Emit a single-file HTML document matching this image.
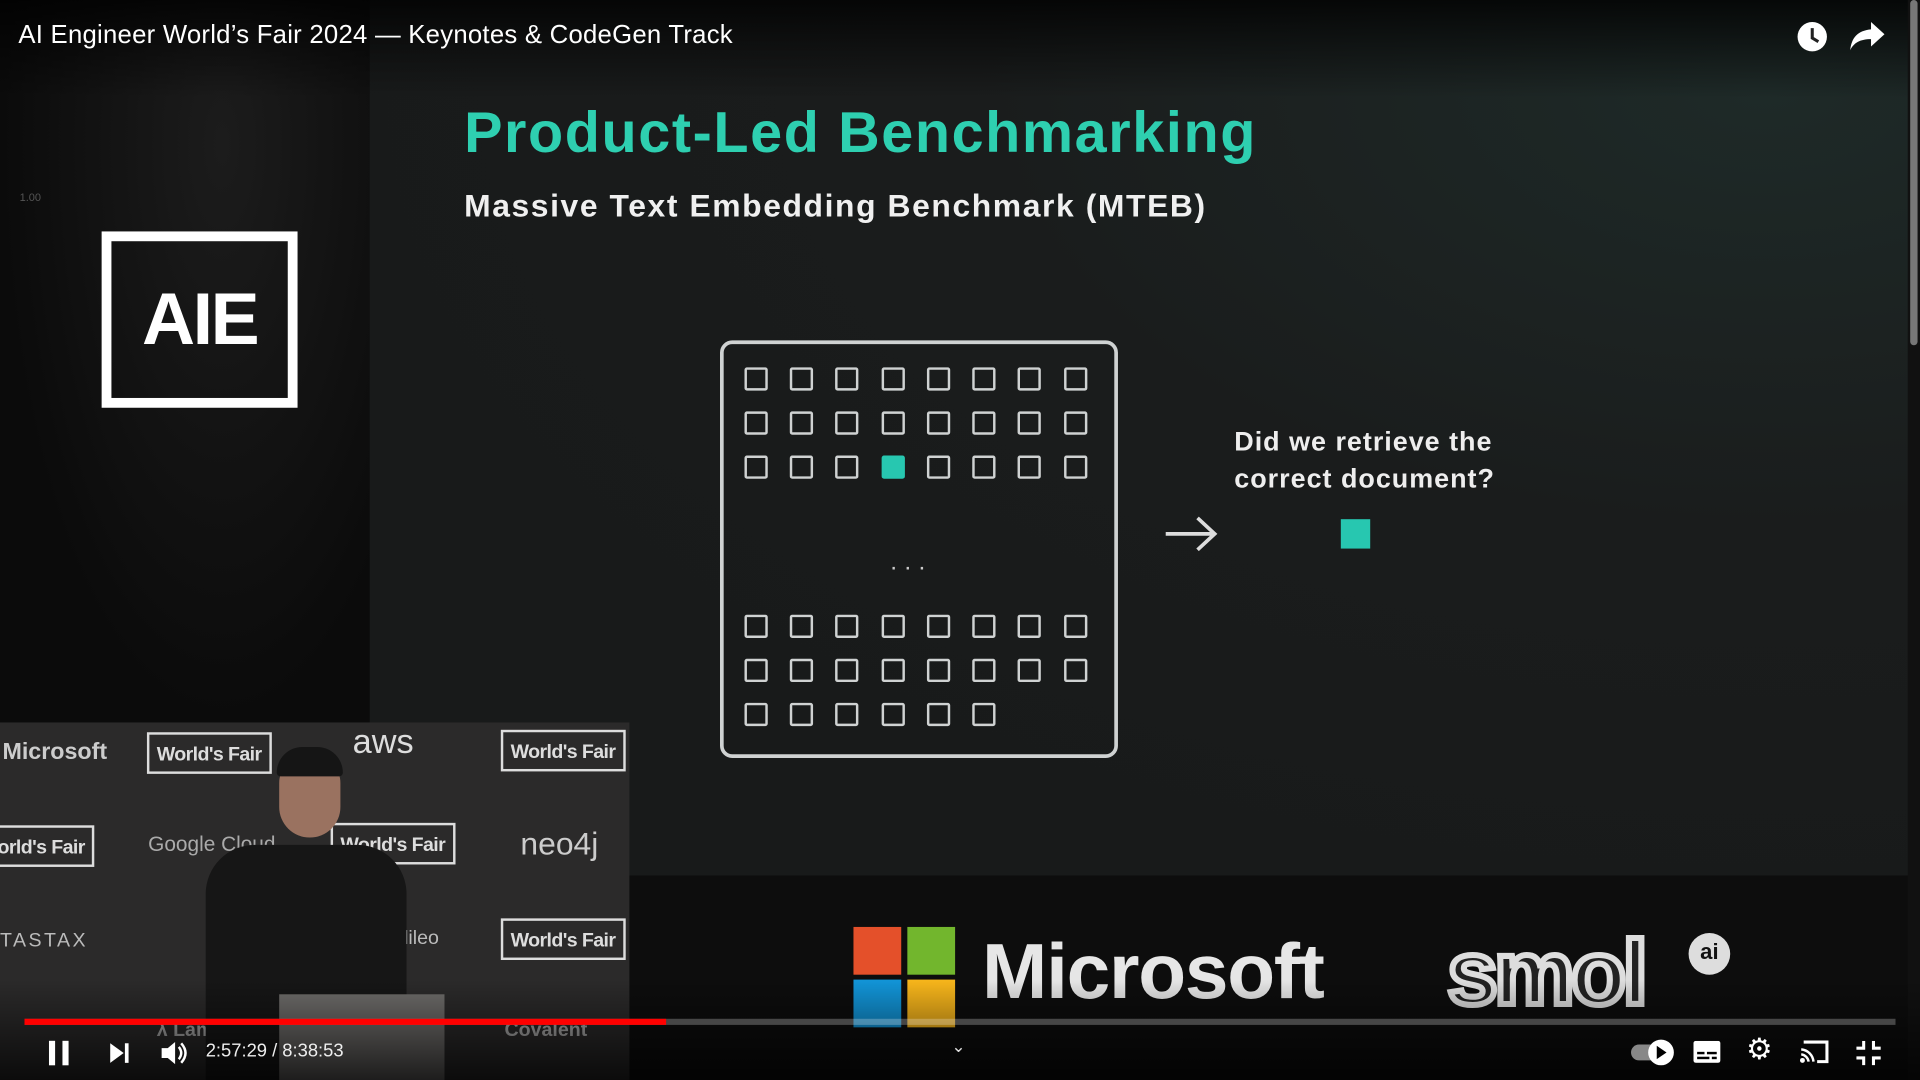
<!DOCTYPE html>
<html><head><meta charset="utf-8">
<style>
html,body{margin:0;padding:0;background:#000;overflow:hidden;width:1920px;height:1080px}
#s{position:absolute;left:0;top:0;width:1568px;height:882px;transform:scale(1.22449);transform-origin:0 0;background:#121515;overflow:hidden;font-family:"Liberation Sans",sans-serif}
.abs{position:absolute}
.sq{position:absolute;width:19px;height:19px;border:2.5px solid #cfd2d2;border-radius:2px;box-sizing:border-box}
.wf{position:absolute;border:2px solid #ddd;color:#ddd;font-weight:bold;font-size:16px;padding:8px 6px 4px;letter-spacing:-0.5px}
</style></head><body><div id="s">
<div class="abs" style="left:0;top:0;width:302px;height:590px;background:radial-gradient(ellipse at 60% 20%,#1c1c1c,#0b0b0b 70%)"></div>
<div class="abs" style="left:302px;top:0;width:1266px;height:715px;background:radial-gradient(ellipse at 90% 10%,#1e2a28,#1a1c1c 40%,#181a1a 80%)"></div>
<div class="abs" style="left:514px;top:715px;width:1054px;height:167px;background:#0d0d0d"></div>
<div class="abs" style="left:16px;top:156px;color:#555;font-size:9px">1.00</div>
<div class="abs" style="left:83px;top:189px;width:160px;height:144px;box-sizing:border-box;border:8px solid #fff;color:#fff;font-weight:bold;font-size:60px;text-align:center;line-height:128px;letter-spacing:-2px">AIE</div>
<div class="abs" style="left:379px;top:80px;color:#2ecfb0;font-weight:bold;font-size:47px;letter-spacing:1.3px">Product-Led Benchmarking</div>
<div class="abs" style="left:379px;top:153px;color:#f0f0f0;font-weight:bold;font-size:26px;letter-spacing:1.3px">Massive Text Embedding Benchmark (MTEB)</div>
<div class="abs" style="left:588px;top:278px;width:325px;height:341px;box-sizing:border-box;border:3px solid #cfd2d2;border-radius:10px"></div>
<div class="abs" style="left:727px;top:448px;color:#ccc;font-size:20px;letter-spacing:6px">...</div>
<svg class="abs" style="left:950px;top:420px" width="46" height="32"><path d="M2 16h40M28 3l14 13-14 13" stroke="#ddd" stroke-width="3" fill="none"/></svg>
<div class="abs" style="left:1095px;top:424px;width:24px;height:24px;background:#27c7b0"></div>
<div class="abs" style="left:1008px;top:346px;color:#eee;font-weight:bold;font-size:22px;line-height:30px;letter-spacing:0.8px">Did we retrieve the<br>correct document?</div>
<!-- inset -->
<div class="abs" style="left:0;top:590px;width:514px;height:292px;background:#2b2a2a;overflow:hidden">
 <div class="abs" style="left:2px;top:14px;color:#ccc;font-size:19px;font-weight:bold">Microsoft</div>
 <div class="wf" style="left:120px;top:8px">World's Fair</div>
 <div class="abs" style="left:288px;top:0;color:#ddd;font-size:28px">aws</div>
 <div class="wf" style="left:409px;top:6px">World's Fair</div>
 <div class="wf" style="left:-10px;top:84px">orld's Fair</div>
 <div class="abs" style="left:121px;top:90px;color:#aaa;font-size:17px">Google Cloud</div>
 <div class="wf" style="left:270px;top:82px">World's Fair</div>
 <div class="abs" style="left:425px;top:84px;color:#ccc;font-size:26px">neo4j</div>
 <div class="abs" style="left:0;top:170px;color:#bbb;font-size:16px;letter-spacing:2px">TASTAX</div>
 <div class="wf" style="left:409px;top:160px">World's Fair</div>
 <div class="abs" style="left:330px;top:168px;color:#bbb;font-size:16px">lileo</div>
 <div class="abs" style="left:412px;top:243px;color:#aaa;font-size:16px;font-weight:bold">Covalent</div>
 <div class="abs" style="left:128px;top:243px;color:#aaa;font-size:16px;font-weight:bold">λ Lamb</div>
 <!-- person -->
 <div class="abs" style="left:228px;top:28px;width:50px;height:66px;border-radius:24px 24px 28px 28px;background:#9a7260"></div>
 <div class="abs" style="left:226px;top:20px;width:54px;height:24px;border-radius:28px 28px 4px 4px;background:#151515"></div>
 <div class="abs" style="left:168px;top:100px;width:164px;height:192px;border-radius:40px 40px 0 0;background:#161616"></div>
 <div class="abs" style="left:228px;top:222px;width:135px;height:70px;background:#6e6c6a"></div>
</div>
<!-- logos -->
<div class="abs" style="left:697px;top:757px;width:39px;height:39px;background:#e4502a"></div>
<div class="abs" style="left:741px;top:757px;width:39px;height:39px;background:#72b62d"></div>
<div class="abs" style="left:697px;top:800px;width:39px;height:39px;background:#1295d8"></div>
<div class="abs" style="left:741px;top:800px;width:39px;height:39px;background:#f8b61b"></div>
<div class="abs" style="left:802px;top:756px;color:#e6e6e6;font-size:64px;font-weight:bold;letter-spacing:-1px">Microsoft</div>
<div class="abs" style="left:1182px;top:752px;color:#222;font-size:74px;font-weight:bold;-webkit-text-stroke:5px #ddd;letter-spacing:-3px">smol</div>
<div class="abs" style="left:1379px;top:762px;width:34px;height:34px;border-radius:50%;background:#ddd;color:#111;font-weight:bold;font-size:18px;text-align:center;line-height:30px">ai</div>
<!-- top bar -->
<div class="abs" style="left:0;top:0;width:1568px;height:80px;background:linear-gradient(#000c,#0000)"></div>
<div class="abs" style="left:15px;top:17px;color:#fff;font-size:21px;letter-spacing:0.2px">AI Engineer World’s Fair 2024 — Keynotes &amp; CodeGen Track</div>
<svg class="abs" style="left:1466px;top:16px" width="28" height="28" viewBox="0 0 28 28"><circle cx="14" cy="14" r="12" fill="#fff"/><path d="M14 7v8l5 3" stroke="#222" stroke-width="2.5" fill="none"/></svg>
<svg class="abs" style="left:1510px;top:16px" width="30" height="26" viewBox="0 0 30 26"><path d="M18 2l11 10-11 10v-6C9 16 4 19 1 25 2 15 7 9 18 8z" fill="#fff"/></svg>
<div class="abs" style="left:1558px;top:0;width:10px;height:882px;background:#111"></div>
<div class="abs" style="left:1560px;top:0;width:6px;height:282px;background:#777;border-radius:3px"></div>
<!-- bottom controls -->
<div class="abs" style="left:0;top:800px;width:1568px;height:82px;background:linear-gradient(#0000,#000b)"></div>
<div class="abs" style="left:20px;top:832px;width:1528px;height:5px;background:#ffffff40"></div>
<div class="abs" style="left:20px;top:832px;width:524px;height:5px;background:#f00"></div>
<div class="abs" style="left:40px;top:850px;width:5px;height:20px;background:#fff"></div>
<div class="abs" style="left:51px;top:850px;width:5px;height:20px;background:#fff"></div>
<svg class="abs" style="left:89px;top:851px" width="18" height="18"><path d="M1 1l11 8-11 8z" fill="#fff"/><rect x="13" y="1" width="3" height="16" fill="#fff"/></svg>
<svg class="abs" style="left:131px;top:849px" width="22" height="22"><path d="M1 7h5l6-5v18l-6-5H1z" fill="#fff"/><path d="M15 6q4 5 0 10M17 3q7 8 0 16" stroke="#fff" stroke-width="2" fill="none"/></svg>
<div class="abs" style="left:168px;top:850px;color:#eee;font-size:15px">2:57:29 / 8:38:53</div>
<div class="abs" style="left:777px;top:846px;color:#ddd;font-size:14px">⌄</div>
<div class="abs" style="left:1332px;top:853px;width:34px;height:13px;border-radius:7px;background:#888"></div>
<div class="abs" style="left:1346px;top:849px;width:21px;height:21px;border-radius:50%;background:#fff"></div>
<svg class="abs" style="left:1352px;top:853px" width="10" height="13"><path d="M1 1l8 5.5-8 5.5z" fill="#000"/></svg>
<svg class="abs" style="left:1383px;top:850px" width="22" height="18"><rect x="0" y="0" width="22" height="18" rx="2" fill="#fff"/><rect x="3" y="9" width="6" height="2" fill="#000"/><rect x="11" y="9" width="8" height="2" fill="#000"/><rect x="3" y="13" width="10" height="2" fill="#000"/><rect x="15" y="13" width="4" height="2" fill="#000"/></svg>
<div class="abs" style="left:1426px;top:843px;color:#fff;font-size:24px">⚙</div>
<svg class="abs" style="left:1470px;top:849px" width="24" height="20"><path d="M3 2h19v16h-8" stroke="#fff" stroke-width="2.5" fill="none"/><path d="M1 8a11 11 0 0 1 10 10M1 12a7 7 0 0 1 6 6" stroke="#fff" stroke-width="2" fill="none"/><circle cx="2" cy="17" r="2" fill="#fff"/></svg>
<svg class="abs" style="left:1516px;top:850px" width="20" height="20"><path d="M6 0v6H0M14 0v6h6M6 20v-6H0M14 20v-6h6" stroke="#fff" stroke-width="2.5" fill="none"/></svg>
</div>
<script>
var g=document.getElementById('s'),xs=[608,645,682,720,757,794,831,869],ys=[300,336,372,502,538,574];
ys.forEach(function(y,r){xs.forEach(function(x,c){if(r==5&&c>5)return;var d=document.createElement('div');d.className='sq';d.style.left=x+'px';d.style.top=y+'px';if(r==2&&c==3){d.style.background='#27c7b0';d.style.borderColor='#27c7b0';}g.appendChild(d);});});
</script>
</body></html>
